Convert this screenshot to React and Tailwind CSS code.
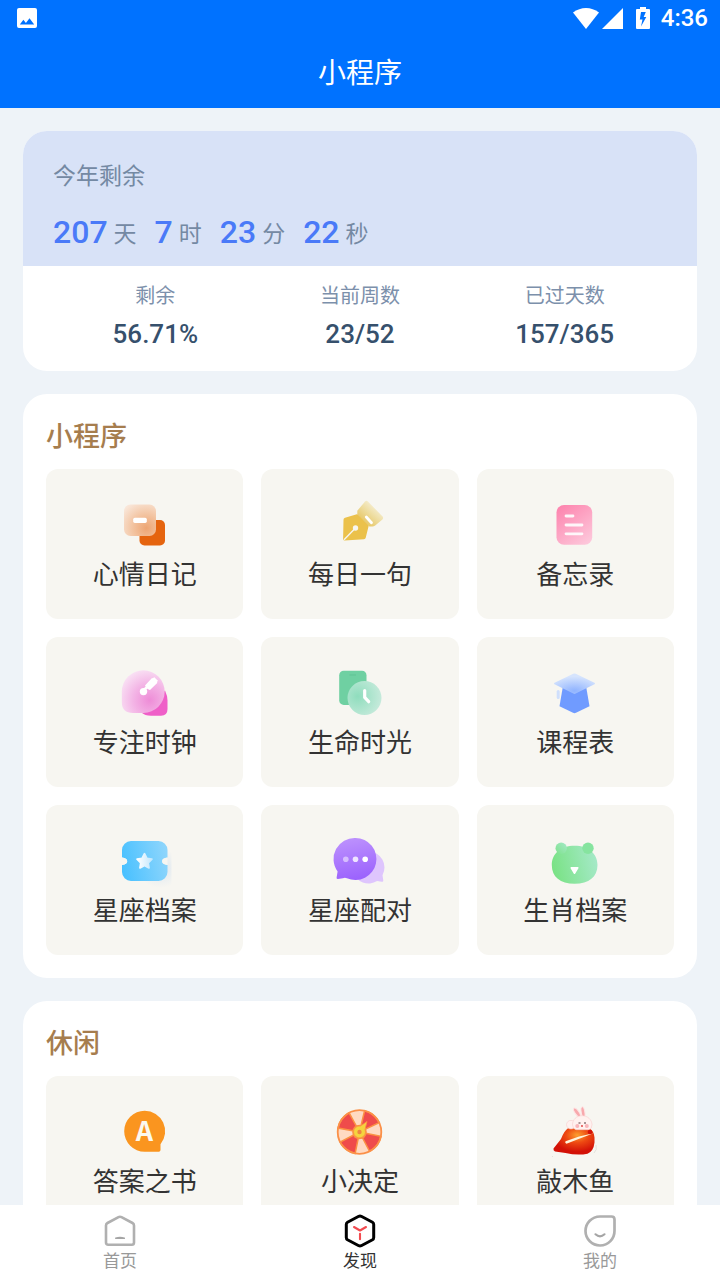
import React from "react";

function MoodIcon() {
  return (
    <>
      <defs>
        <radialGradient id="mood" cx="0.7" cy="0.75" r="0.9">
          <stop offset="0" stopColor="#eda573" />
          <stop offset="0.5" stopColor="#f3c5a3" />
          <stop offset="1" stopColor="#f9e6d8" />
        </radialGradient>
      </defs>
      <rect x="20.5" y="21" width="25.5" height="25.5" rx="5" fill="#e5640f" />
      <rect x="5" y="5.5" width="32" height="31.5" rx="6.5" fill="url(#mood)" />
      <rect x="14.2" y="18.7" width="13.6" height="5.2" rx="1.6" fill="#fff" />
    </>
  );
}

function PenIcon() {
  return (
    <>
      <defs>
        <linearGradient id="pen" x1="0.2" y1="0.9" x2="0.8" y2="0.2">
          <stop offset="0" stopColor="#e6c35c" />
          <stop offset="0.55" stopColor="#eedda0" />
          <stop offset="1" stopColor="#f6f0d8" />
        </linearGradient>
      </defs>
      <path d="M11 18.800 22 15.400q1.500-.4 2.600.5l9.400 8.700q1 1 .7 2.200l-3 12q-.3 1.300-1.700 1.400L10.500 41.400q-1.400 0-1.400-1.400l.4-19.200q0-1.500 1.500-2z" fill="#ebc14b" />
      <path d="M31.100 2.400q1.400-1.400 2.800 0L48.600 17.600q1.200 1.500-.2 2.800l-7.200 6.100q-1.300 1-2.700 1h-3.200L23.300 15.200v-3.500z" fill="url(#pen)" />
      <path d="m32.300 18 5.200 5.700" stroke="#fff" strokeWidth="2.800" strokeLinecap="round" />
      <circle cx="21.500" cy="29" r="2.700" fill="#f7f6f0" />
      <path d="M21.500 29 10 40.700" stroke="#f7f6f0" strokeWidth="1.400" />
    </>
  );
}

function MemoIcon() {
  return (
    <>
      <defs>
        <linearGradient id="memo" x1="0.1" y1="0" x2="0.8" y2="1">
          <stop offset="0" stopColor="#fd84ae" />
          <stop offset="1" stopColor="#fdc6da" />
        </linearGradient>
      </defs>
      <rect x="7.500" y="6" width="35.700" height="39.700" rx="7.500" fill="url(#memo)" />
      <path d="M17 17h7M17 26h16M17 34.800h16" stroke="#fff" strokeWidth="2.800" strokeLinecap="round" opacity="0.9" />
    </>
  );
}

function FocusIcon() {
  return (
    <>
      <defs>
        <radialGradient id="focus" cx="0.65" cy="0.7" r="0.75">
          <stop offset="0" stopColor="#ee8cd7" />
          <stop offset="0.5" stopColor="#f3b3e5" />
          <stop offset="1" stopColor="#f9e1f4" />
        </radialGradient>
      </defs>
      <path d="M46 23.500q2.400 5 2.500 10V42q0 6.700-6.500 6.700H32q-6 0-10-3.500z" fill="#ef5fc8" />
      <path d="M24.300 3.300a21.300 21.300 0 0 1 0 42.700H14Q2.800 46 2.800 35V24.800A21.500 21.500 0 0 1 24.300 3.300z" fill="url(#focus)" />
      <circle cx="24.500" cy="24.600" r="3.700" fill="#fff" />
      <path d="m24 24 5-5" stroke="#fff" strokeWidth="2.500" />
      <path d="m26 18.500 7-7.400q2 .3 2-1l4.200 4q-1.800 0-1 2L31 23q-2.700-.3-5-4.500z" fill="#fff" />
    </>
  );
}

function LifeIcon() {
  return (
    <>
      <defs>
        <radialGradient id="life" cx="0.3" cy="0.45" r="0.75">
          <stop offset="0" stopColor="#8fddbd" />
          <stop offset="1" stopColor="#c9ebdd" />
        </radialGradient>
      </defs>
      <rect x="5.200" y="3.700" width="27.300" height="34.200" rx="4.500" fill="#6fd0a2" />
      <path d="M15.500 8h6.500" stroke="#57bd8c" strokeWidth="1" opacity="0.6" />
      <circle cx="30.500" cy="31" r="17" fill="url(#life)" />
      <path d="M30.700 23.600v6.800l4 4.300" fill="none" stroke="#fff" strokeWidth="3.200" strokeLinecap="round" strokeLinejoin="round" />
    </>
  );
}

function CourseIcon() {
  return (
    <>
      <defs>
        <radialGradient id="course" cx="0.5" cy="0.85" r="0.7">
          <stop offset="0" stopColor="#8fb3ff" />
          <stop offset="1" stopColor="#d6e4fd" />
        </radialGradient>
      </defs>
      <path d="M13.800 20h23.400l3.300 19.300-13.500 6.500q-1.500.7-3 0l-13.500-6.500z" fill="#709bff" />
      <path d="M24.300 6.700q1.200-.6 2.400 0l18.800 9q1.200.8 0 1.600l-18.800 9.300q-1.200.6-2.400 0L5.500 17.300q-1.200-.8 0-1.600z" fill="url(#course)" />
      <rect x="7.700" y="23" width="3" height="9" rx="1.500" fill="#cfdffc" />
    </>
  );
}

function TicketIcon() {
  return (
    <>
      <defs>
        <linearGradient id="ticket" x1="0" y1="0.6" x2="1" y2="0.4">
          <stop offset="0" stopColor="#4ac1ff" />
          <stop offset="1" stopColor="#8dd5fc" />
        </linearGradient>
        <linearGradient id="star" x1="0" y1="0" x2="1" y2="0">
          <stop offset="0" stopColor="#fff" />
          <stop offset="1" stopColor="#c3e7fd" />
        </linearGradient>
        <radialGradient id="ticketShade" cx="0.75" cy="0.5" r="0.5">
          <stop offset="0" stopColor="#dde7f0" />
          <stop offset="1" stopColor="#dde7f0" stopOpacity="0" />
        </radialGradient>
      </defs>
      <rect x="8" y="14" width="44.500" height="39" fill="url(#ticketShade)" />
      <path d="M12 6h27.500a9 9 0 0 1 9 9v7.600q-5.400.4-5.400 3.700t5.400 3.700v7a9 9 0 0 1-9 9H12a9 9 0 0 1-9-9v-7q5.200-.4 5.200-3.700T3 22.600V15a9 9 0 0 1 9-9z" fill="url(#ticket)" />
      <path d="M3 22.600q5.200.4 5.200 3.700T3 30zM48.500 22.600q-5.400.4-5.400 3.700t5.400 3.700z" fill="#f7f6f1" />
      <path d="m25.500 18.700 2.400 4.700 5 .8-3.700 3.700.8 5-4.500-2.400-4.500 2.400.8-5-3.700-3.700 5-.8z" fill="url(#star)" stroke="url(#star)" strokeWidth="1.800" strokeLinejoin="round" />
    </>
  );
}

function ChatIcon() {
  return (
    <>
      <defs>
        <linearGradient id="chat" x1="0.3" y1="0" x2="0.5" y2="1">
          <stop offset="0" stopColor="#bd92fd" />
          <stop offset="1" stopColor="#9b62fd" />
        </linearGradient>
      </defs>
      <path d="M35 16.500a16 16 0 0 1 13.500 23.700l.8 5.400q0 1.500-1.500 1.200l-4.700-.8A16 16 0 1 1 35 16.500z" fill="#dec5fd" />
      <path d="M21.500 3a21 21 0 1 1-8.600 40.200q-2-.8-4 0l-5 .8q-1.600 0-1.300-1.600l1-6A21 21 0 0 1 21.500 3z" fill="url(#chat)" />
      <circle cx="11.800" cy="24.300" r="2.800" fill="#fff" opacity="0.5" />
      <circle cx="21.500" cy="24.300" r="2.800" fill="#fff" opacity="0.8" />
      <circle cx="31.200" cy="24.300" r="2.800" fill="#fff" />
    </>
  );
}

function BearIcon() {
  return (
    <>
      <defs>
        <linearGradient id="bear" x1="0" y1="0.6" x2="1" y2="0.4">
          <stop offset="0" stopColor="#79e284" />
          <stop offset="1" stopColor="#a5e9c8" />
        </linearGradient>
        <linearGradient id="ear" x1="1" y1="0" x2="0" y2="1">
          <stop offset="0" stopColor="#a5e9c8" />
          <stop offset="1" stopColor="#7ee28c" />
        </linearGradient>
      </defs>
      <path d="M25.600 10.800c14 0 22.900 8 22.900 19.200 0 12-8.500 18.700-22.900 18.700S2.800 42 2.800 30c0-11.200 8.800-19.200 22.800-19.200z" fill="url(#bear)" />
      <circle cx="12.200" cy="13.300" r="5.700" fill="url(#ear)" />
      <circle cx="39" cy="13.300" r="5.700" fill="#86e49f" />
      <path d="M22.200 32.800h6.600l-3.300 5.500z" fill="#fff" stroke="#fff" strokeWidth="1.500" strokeLinejoin="round" />
    </>
  );
}

function AnswerIcon() {
  return (
    <>
      <path d="M25.700 4.700A20.500 20.500 0 0 1 41.500 38.200V44q0 1.700-1.700 1.700H25.700a20.500 20.500 0 0 1 0-41z" fill="#fa951f" />
      <text x="25.500" y="34.500" textAnchor="middle" fontSize="27" fontWeight="700" fontFamily="Noto Sans CJK SC, sans-serif" fill="#fbf8ee">A</text>
    </>
  );
}

function WheelIcon() {
  return (
    <>
      <circle cx="25.500" cy="26" r="21.800" fill="#ffdac2" />
      {[-51, 37, 127, 216].map((angle) => (
        <path key={angle} d="M25.500 26 45.200 16.600A21.800 21.800 0 0 1 45.200 35.400z" fill="#ef4b4b" stroke="#fb9143" strokeWidth="1.500" transform={`rotate(${angle} 25.500 26)`} />
      ))}
      <circle cx="25.500" cy="26" r="21.800" fill="none" stroke="#fb9048" strokeWidth="1.800" />
      <circle cx="25.500" cy="26" r="7.300" fill="#fb9143" />
      <path d="M33 15.500 31 23.500A6 6 0 1 1 26.500 20z" fill="#f4d43e" stroke="#fb9143" strokeWidth="0.800" />
      <circle cx="25.500" cy="26" r="2.200" fill="#ee8741" />
    </>
  );
}

function FishIcon() {
  return (
    <>
      <defs>
        <radialGradient id="fish" cx="0.58" cy="0.3" r="0.6">
          <stop offset="0" stopColor="#fca02f" />
          <stop offset="0.45" stopColor="#ee4a12" />
          <stop offset="1" stopColor="#d31107" />
        </radialGradient>
      </defs>
      <path d="M4.500 42.500 12 33q3-8 7-10.700 12-3 21 .2 5 2 5.500 9v5q-1 9-7 11.200-10 2-22-.7L6 45.500q-2-1-1.500-3z" fill="url(#fish)" />
      <path d="M16.500 35.200 30 30.500l14.500-3.200-13 5-14 5.400q-2-.8-1-2.500z" fill="#fff4dc" />
      <ellipse cx="22" cy="18.700" rx="4.500" ry="4.300" fill="#fff1ef" stroke="#f9cdcd" strokeWidth="0.600" />
      <ellipse cx="28" cy="6.500" rx="2" ry="5.300" transform="rotate(-35 28 6.500)" fill="#f8a9ad" stroke="#fde5e5" strokeWidth="1" />
      <ellipse cx="34" cy="6" rx="1.800" ry="5.200" transform="rotate(-10 34 6)" fill="#f8a9ad" stroke="#fde5e5" strokeWidth="1" />
      <path d="M33 9.700c5.500 0 10 4 10 9q0 4-3 5H27q-3.500-1-3.500-5c0-5 4-9 9.500-9z" fill="#fff1ef" stroke="#f9cdcd" strokeWidth="0.600" />
      <circle cx="28.300" cy="20" r="2" fill="#f9b4b8" />
      <circle cx="37.800" cy="20" r="2" fill="#f9b4b8" />
      <path d="M29.500 17h2M35 17h2" stroke="#57363b" strokeWidth="1" />
      <circle cx="33" cy="20" r="0.900" fill="#d33" />
      <circle cx="41" cy="26" r="2.300" fill="#d31107" />
      <path d="M47 39q1.500 5-2 8M3 50.500h1" fill="none" stroke="#dddcd6" strokeWidth="0.800" />
    </>
  );
}

function Tile({ label, Icon }) {
  return (
    <button type="button" className="flex h-[150px] flex-col items-center justify-center gap-1.5 rounded-xl bg-[#f7f6f1]">
      <svg viewBox="0 0 52 52" className="size-[52px] overflow-visible" aria-hidden="true">
        <Icon />
      </svg>
      <span className="font-[KaiTi,STKaiti,'Noto_Sans_CJK_SC',sans-serif] text-[26px] leading-8 text-[#333]">{label}</span>
    </button>
  );
}

function Section({ title, items }) {
  return (
    <section className="rounded-3xl bg-white p-[23px]">
      <h2 className="mb-4 text-[27px] leading-9 font-medium text-[#a67d4e]">{title}</h2>
      <div className="grid grid-cols-3 gap-[18px]">
        {items.map(([label, Icon]) => (
          <Tile key={label} label={label} Icon={Icon} />
        ))}
      </div>
    </section>
  );
}

const programs = [
  ["心情日记", MoodIcon],
  ["每日一句", PenIcon],
  ["备忘录", MemoIcon],
  ["专注时钟", FocusIcon],
  ["生命时光", LifeIcon],
  ["课程表", CourseIcon],
  ["星座档案", TicketIcon],
  ["星座配对", ChatIcon],
  ["生肖档案", BearIcon],
];

const leisure = [
  ["答案之书", AnswerIcon],
  ["小决定", WheelIcon],
  ["敲木鱼", FishIcon],
];

const countdown = [
  ["207", "天"],
  ["7", "时"],
  ["23", "分"],
  ["22", "秒"],
];

const stats = [
  ["剩余", "56.71%"],
  ["当前周数", "23/52"],
  ["已过天数", "157/365"],
];

function StatusBar() {
  return (
    <div className="flex h-9 items-center justify-between pr-3 pl-[17px]">
      <svg viewBox="0 0 20 20" className="size-5" aria-hidden="true">
        <path fillRule="evenodd" d="M2 0h16a2 2 0 0 1 2 2v16a2 2 0 0 1-2 2H2a2 2 0 0 1-2-2V2a2 2 0 0 1 2-2zm.8 16.500h14.400l-4.700-6.300-3.600 4.700-2.500-3.100z" fill="#fff" />
      </svg>
      <div className="flex items-center">
        <svg viewBox="0 0 26 21" className="h-[21px] w-[26px]" aria-hidden="true">
          <path d="M0 4.500Q6 0 13 0t13 4.500L13 21z" fill="#fff" />
        </svg>
        <svg viewBox="0 0 21 21" className="ml-[3px] size-[21px]" aria-hidden="true">
          <path d="M21 0v21H0z" fill="#fff" />
        </svg>
        <svg viewBox="0 0 14 22" className="ml-[13px] h-[22px] w-[14px]" aria-hidden="true">
          <path fillRule="evenodd" d="M4 0h6v2h3q1 0 1 1v18q0 1-1 1H1q-1 0-1-1V3q0-1 1-1h3zM5 5 3.800 12.500h2.700L5 19.500 10.300 10H7.700L9.800 5z" fill="#fff" />
        </svg>
        <span className="ml-[11px] font-[Roboto,sans-serif] text-2xl leading-6 font-medium">4:36</span>
      </div>
    </div>
  );
}

function NavItem({ label, active, children }) {
  return (
    <a
      href="#"
      aria-current={active ? "page" : undefined}
      className={active ? "flex flex-1 flex-col items-center text-[#333]" : "flex flex-1 flex-col items-center text-[#999]"}
    >
      <svg viewBox="0 0 34 34" className="size-[34px]" fill="none" strokeLinecap="round" strokeLinejoin="round" aria-hidden="true">
        {children}
      </svg>
      <span className="text-[17px] leading-6">{label}</span>
    </a>
  );
}

export default function App() {
  return (
    <div className="flex h-screen flex-col bg-[#eef3f8] font-['Noto_Sans_CJK_SC',sans-serif]">
      <header className="shrink-0 bg-[#0072ff] text-white">
        <StatusBar />
        <h1 className="pb-0.5 text-center text-[28px] leading-[70px]">小程序</h1>
      </header>

      <main className="flex min-h-0 flex-1 flex-col gap-[23px] overflow-y-auto p-[23px] [scrollbar-width:none] *:shrink-0">
        <section className="overflow-hidden rounded-3xl bg-white">
          <div className="bg-[#d8e2f7] px-[30px] pt-7 pb-[14px]">
            <h2 className="text-[23px] leading-[30px] text-[#7489a3]">今年剩余</h2>
            <div className="mt-[23px] flex gap-[18px]">
              {countdown.map(([value, unit]) => (
                <span key={unit} className="flex items-center gap-1.5 leading-10">
                  <span className="font-[Roboto,sans-serif] text-[32px] font-medium text-[#4a7af8]">{value}</span>
                  <span className="text-[23px] text-[#7489a3]">{unit}</span>
                </span>
              ))}
            </div>
          </div>
          <dl className="grid grid-cols-3 px-[30px] pt-[14px] pb-[19px] text-center">
            {stats.map(([label, value]) => (
              <div key={label} className="flex flex-col gap-1.5">
                <dt className="text-xl leading-[30px] text-[#7c90ab]">{label}</dt>
                <dd className="font-[Roboto,sans-serif] text-[26px] leading-9 font-medium text-[#36506c]">{value}</dd>
              </div>
            ))}
          </dl>
        </section>
        <Section title="小程序" items={programs} />
        <Section title="休闲" items={leisure} />
      </main>

      <nav className="flex shrink-0 bg-white pt-[9px] pb-2">
        <NavItem label="首页">
          <path d="M18.500 3.200 29.500 9q1.500.8 1.500 2.500v17q0 2.200-2.200 2.200H5.200Q3 30.700 3 28.500v-17Q3 9.800 4.500 9l11-5.800q1.500-.8 3 0z" stroke="#b0b0b0" strokeWidth="2.600" />
          <path d="M12.700 24.200q4.300-1.400 8.600 0z" fill="#a5a5a5" stroke="#a5a5a5" strokeWidth="1.500" />
        </NavItem>
        <NavItem label="发现" active>
          <path d="M18.200 2.300 29.500 8.300q1.200.7 1.200 2.200v13q0 1.500-1.200 2.200l-11.300 6q-1.200.6-2.400 0l-11.300-6q-1.200-.7-1.200-2.200v-13q0-1.500 1.200-2.200l11.300-6q1.200-.6 2.400 0z" stroke="#000" strokeWidth="3" />
          <path d="m11 13 6 3.500 6-3.500M17 19.800v5.400" stroke="#f24b50" strokeWidth="2.100" />
        </NavItem>
        <NavItem label="我的">
          <path d="M17 2.500h11.500q3 0 3 3V16.800A14.500 14.500 0 1 1 17 2.500z" stroke="#b0b0b0" strokeWidth="2.700" />
          <path d="M12.500 20.300q4.500 4 9 0" stroke="#a5a5a5" strokeWidth="2.200" />
        </NavItem>
      </nav>
    </div>
  );
}
